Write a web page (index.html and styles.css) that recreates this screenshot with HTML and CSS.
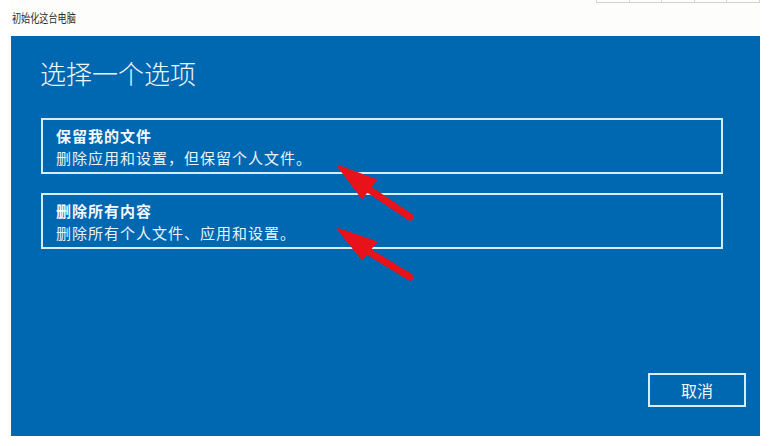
FILE: index.html
```html
<!DOCTYPE html>
<html lang="zh-CN">
<head>
<meta charset="utf-8">
<title>初始化这台电脑</title>
<link rel="stylesheet" href="styles.css">
</head>
<body>
<div class="grid-deco">
  <span></span><span></span><span></span><span></span><span></span>
</div>
<div class="window">
  <div class="titlebar"><span class="title-text">初始化这台电脑</span></div>
  <div class="panel">
    <h1 class="heading">选择一个选项</h1>
    <div class="options">
      <div class="option">
        <div class="opt-title">保留我的文件</div>
        <div class="opt-desc">删除应用和设置，但保留个人文件。</div>
      </div>
      <div class="option">
        <div class="opt-title">删除所有内容</div>
        <div class="opt-desc">删除所有个人文件、应用和设置。</div>
      </div>
    </div>
    <div class="actions">
      <button class="cancel">取消</button>
    </div>
    <svg class="arrows" width="749" height="400" viewBox="0 0 749 400">
      <g fill="#e8121b" stroke="#e8121b" stroke-linejoin="round">
        <line x1="399" y1="181" x2="350" y2="148" stroke-width="7" stroke-linecap="round"/>
        <polygon points="327,130 351,162 365,144" stroke-width="2"/>
        <line x1="399" y1="241" x2="350" y2="211" stroke-width="7" stroke-linecap="round"/>
        <polygon points="327,193 351,223 365,206" stroke-width="2"/>
      </g>
    </svg>
  </div>
</div>
</body>
</html>
```
FILE: styles.css
```css
html, body {
  margin: 0;
  padding: 0;
  background: #ffffff;
}
body {
  font-family: "Noto Sans CJK SC", "Noto Sans", sans-serif;
  position: relative;
  width: 769px;
  height: 446px;
  overflow: hidden;
}
.grid-deco {
  position: absolute;
  top: 0;
  left: 596px;
  width: 164px;
  height: 2px;
  border-bottom: 1px solid #cfd3d6;
  display: flex;
}
.grid-deco span {
  flex: 1;
  border-left: 1px solid #d6d9dc;
}
.grid-deco span:last-child {
  border-right: 1px solid #d6d9dc;
}
.window {
  margin-left: 11px;
  width: 749px;
}
.titlebar {
  height: 36px;
  box-sizing: border-box;
  padding-left: 1px;
  padding-top: 9px;
  font-size: 12px;
  line-height: 18px;
  color: #2a2a2a;
  background: #fdfefc;
}
.title-text {
  display: inline-block;
  transform: scaleX(0.76);
  transform-origin: left center;
}
.panel {
  position: relative;
  height: 400px;
  box-sizing: border-box;
  background: #0067b1;
  padding: 21px 37px 29px 30px;
  display: flex;
  flex-direction: column;
  color: #ffffff;
}
.heading {
  margin: 0 0 0 -1px;
  font-size: 26px;
  line-height: 32px;
  font-weight: 300;
  color: #eef6fb;
}
.options {
  margin-top: 29px;
  display: flex;
  flex-direction: column;
  gap: 19px;
}
.option {
  border: 2px solid #d5eef6;
  height: 56px;
  box-sizing: border-box;
  padding: 5px 13px 0;
}
.opt-title {
  font-size: 15px;
  letter-spacing: 1px;
  line-height: 22px;
  font-weight: 700;
  color: #f4f9fc;
}
.opt-desc {
  font-size: 15px;
  letter-spacing: 1px;
  line-height: 22px;
  color: #e9f3f9;
}
.actions {
  margin-top: auto;
  display: flex;
  justify-content: flex-end;
  margin-right: -23px;
}
.cancel {
  width: 98px;
  height: 34px;
  box-sizing: border-box;
  border: 2px solid #d5eef6;
  background: #0067b1;
  color: #f2f8fc;
  font-family: "Noto Sans CJK SC", sans-serif;
  font-size: 16px;
  line-height: 20px;
  padding: 0;
}
.arrows {
  position: absolute;
  left: 0;
  top: 0;
  pointer-events: none;
}
```
